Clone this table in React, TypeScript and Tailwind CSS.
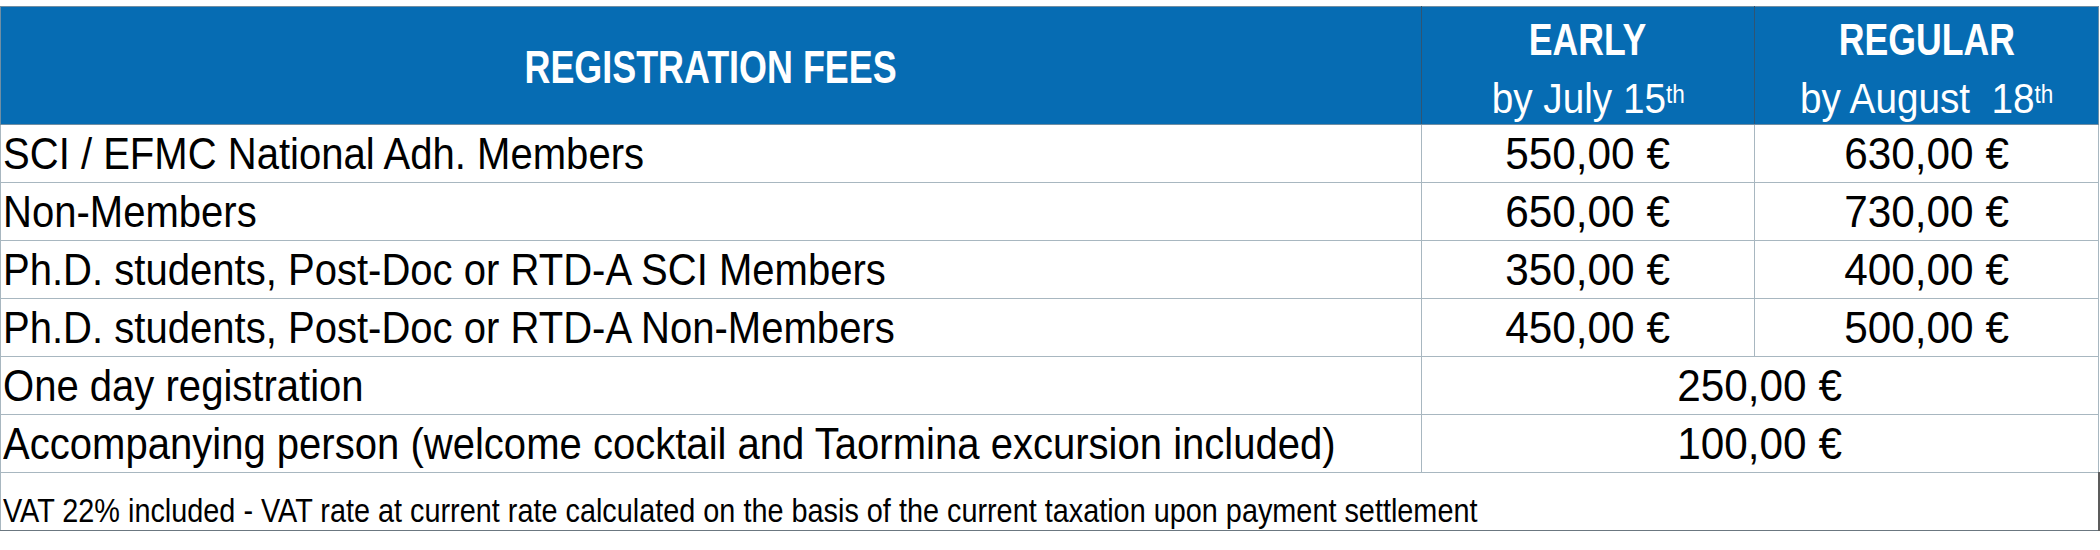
const font = { fontFamily: "'Liberation Sans', Arial, sans-serif" };

const rows = [
  { label: "SCI / EFMC National Adh. Members", early: "550,00 €", regular: "630,00 €" },
  { label: "Non-Members", early: "650,00 €", regular: "730,00 €" },
  { label: "Ph.D. students, Post-Doc or RTD-A SCI Members", early: "350,00 €", regular: "400,00 €" },
  { label: "Ph.D. students, Post-Doc or RTD-A Non-Members", early: "450,00 €", regular: "500,00 €" },
];

const flat = [
  { label: "One day registration", price: "250,00 €" },
  { label: "Accompanying person (welcome cocktail and Taormina excursion included)", price: "100,00 €" },
];

// Arial squeezed horizontally stands in for the narrow Office font
function Narrow({ children, center = false, squeeze = "scale-x-[0.89]" }: { children: React.ReactNode; center?: boolean; squeeze?: string }) {
  return (
    <span className={`inline-block whitespace-pre ${center ? "origin-center" : "origin-left"} ${squeeze}`}>
      {children}
    </span>
  );
}

const cell = "border border-[#a8b7c0] h-[58px] align-bottom pb-[6px] leading-none whitespace-nowrap";

export default function App() {
  return (
    <div className="w-[2100px] h-[550px] bg-white pt-[6px] overflow-hidden" style={font}>
      <table className="table-fixed border-collapse w-[2098px] text-black">
        <colgroup>
          <col className="w-[1421px]" />
          <col className="w-[333px]" />
          <col className="w-[344px]" />
        </colgroup>
        <thead>
          <tr className="bg-[#066cb3] text-white h-[118px]">
            <th className="border border-[#6f8ea4] border-r-[#2f5574] align-middle text-center font-bold text-[46px] leading-none pt-[2px]">
              <Narrow center squeeze="scale-x-[0.78]">REGISTRATION FEES</Narrow>
            </th>
            <th className="border border-[#6f8ea4] border-r-[#2f5574] align-middle text-center leading-none pt-[6px]">
              <div className="font-bold text-[44px]">
                <Narrow center squeeze="scale-x-[0.81]">EARLY</Narrow>
              </div>
              <div className="font-normal text-[43px] mt-[15px]">
                <Narrow center squeeze="scale-x-[0.9]">
                  by July 15<sup className="text-[25px] relative -top-[10px]">th</sup>
                </Narrow>
              </div>
            </th>
            <th className="border border-[#6f8ea4] align-middle text-center leading-none pt-[6px]">
              <div className="font-bold text-[44px]">
                <Narrow center squeeze="scale-x-[0.81]">REGULAR</Narrow>
              </div>
              <div className="font-normal text-[43px] mt-[15px]">
                <Narrow center squeeze="scale-x-[0.9]">
                  by August  18<sup className="text-[25px] relative -top-[10px]">th</sup>
                </Narrow>
              </div>
            </th>
          </tr>
        </thead>
        <tbody className="text-[45px]">
          {rows.map((r) => (
            <tr key={r.label}>
              <td className={`${cell} text-left pl-[2px]`}>
                <Narrow>{r.label}</Narrow>
              </td>
              <td className={`${cell} text-center`}>
                <Narrow center squeeze="scale-x-[0.94]">{r.early}</Narrow>
              </td>
              <td className={`${cell} text-center`}>
                <Narrow center squeeze="scale-x-[0.94]">{r.regular}</Narrow>
              </td>
            </tr>
          ))}
          {flat.map((r) => (
            <tr key={r.label}>
              <td className={`${cell} text-left pl-[2px]`}>
                <Narrow>{r.label}</Narrow>
              </td>
              <td colSpan={2} className={`${cell} text-center`}>
                <Narrow center squeeze="scale-x-[0.94]">{r.price}</Narrow>
              </td>
            </tr>
          ))}
          <tr>
            <td
              colSpan={3}
              className="border border-[#a8b7c0] border-r-2 border-r-[#5c5c5c] border-b-[#6b7780] h-[58px] align-bottom pb-[3px] pl-[2px] text-left text-[34px] leading-none whitespace-nowrap"
            >
              <Narrow squeeze="scale-x-[0.848]">
                VAT 22% included - VAT rate at current rate calculated on the basis of the current taxation upon payment settlement
              </Narrow>
            </td>
          </tr>
        </tbody>
      </table>
    </div>
  );
}
